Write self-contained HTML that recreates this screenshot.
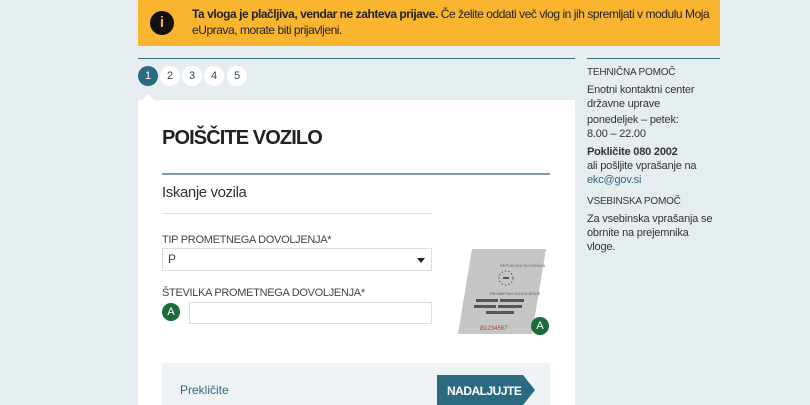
<!DOCTYPE html>
<html><head><meta charset="utf-8"><style>
body{margin:0;width:810px;height:405px;overflow:hidden;background:#e6edf0;font-family:"Liberation Sans",sans-serif;position:relative;color:#222}
.a{position:absolute}
.banner{left:138px;top:0;width:582px;height:46px;background:#f9b430}
.card{left:138px;top:100px;width:437px;height:305px;background:#fff}
.st{width:20px;height:20px;border-radius:50%;background:#fff;font-size:11px;text-align:center;line-height:20px;color:#444;top:66px}
.lbl{font-size:11px;color:#444;letter-spacing:-0.3px}
.sb{font-size:11px;color:#333;line-height:14px;left:587px;letter-spacing:-0.2px}
</style></head><body>
<div class="a banner"></div>
<div class="a" style="left:150px;top:11px;width:24px;height:24px;border-radius:50%;background:#111;color:#f9b430;font-weight:bold;font-size:15px;text-align:center;line-height:24px">i</div>
<div class="a" style="left:192px;top:6px;width:528px;font-size:12px;line-height:16px;color:#222;letter-spacing:-0.45px"><b>Ta vloga je plačljiva, vendar ne zahteva prijave.</b> Če želite oddati več vlog in jih spremljati v modulu Moja eUprava, morate biti prijavljeni.</div>
<div class="a" style="left:138px;top:58px;width:437px;height:1px;background:#3b6b80"></div>
<div class="a" style="left:587px;top:58px;width:133px;height:1px;background:#3b6b80"></div>
<div class="a card"></div>
<div class="a st" style="left:138px;background:#2b6a80;color:#fff">1</div>
<div class="a st" style="left:160px">2</div>
<div class="a st" style="left:182px">3</div>
<div class="a st" style="left:204px">4</div>
<div class="a st" style="left:227px">5</div>
<div class="a" style="left:142px;top:94px;width:0;height:0;border:6px solid transparent;border-bottom-color:#fff;border-top:0"></div>
<div class="a" style="left:162px;top:127px;font-size:20px;font-weight:bold;color:#222;letter-spacing:-0.9px">POIŠČITE VOZILO</div>
<div class="a" style="left:162px;top:173px;width:388px;height:2px;background:#7d98a6"></div>
<div class="a" style="left:162px;top:184px;font-size:15px;color:#333;letter-spacing:-0.4px">Iskanje vozila</div>
<div class="a" style="left:162px;top:213px;width:270px;height:1px;background:#ddd"></div>
<div class="a lbl" style="left:162px;top:234px">TIP PROMETNEGA DOVOLJENJA*</div>
<div class="a" style="left:162px;top:248px;width:268px;height:21px;border:1px solid #ddd;font-size:12px;line-height:21px;color:#444"><span style="padding-left:5px">P</span><span style="position:absolute;right:6px;top:9px;border:4px solid transparent;border-top:5px solid #222;border-bottom:0"></span></div>
<div class="a lbl" style="left:162px;top:287px">ŠTEVILKA PROMETNEGA DOVOLJENJA*</div>
<div class="a" style="left:162px;top:303px;width:18px;height:18px;border-radius:50%;background:#1e6b3a;color:#fff;font-size:11px;text-align:center;line-height:18px">A</div>
<div class="a" style="left:189px;top:302px;width:241px;height:20px;border:1px solid #ddd"></div>
<svg class="a" style="left:458px;top:247px" width="90" height="90"><polygon points="14,2 88,2 74,87 0,87" fill="#c4c7c3"/><text x="42" y="20" font-size="4" fill="#666" font-family="Liberation Sans">REPUBLIKA SLOVENIJA</text><circle cx="48" cy="31" r="7" fill="none" stroke="#555" stroke-dasharray="1.5 2"/><rect x="45" y="30" width="6" height="2" fill="#555"/><text x="32" y="48" font-size="4" fill="#555" font-family="Liberation Sans">PROMETNO DOVOLJENJE</text><rect x="18" y="52" width="22" height="3" fill="#555"/><rect x="42" y="52" width="24" height="3" fill="#555"/><rect x="16" y="58" width="22" height="3" fill="#555"/><rect x="40" y="58" width="24" height="3" fill="#555"/><rect x="28" y="64" width="28" height="3" fill="#555"/><text x="22" y="83" font-size="6" fill="#c33" font-style="italic" font-family="Liberation Sans">B1234567</text></svg>
<div class="a" style="left:531px;top:317px;width:18px;height:18px;border-radius:50%;background:#1e6b3a;color:#fff;font-size:11px;text-align:center;line-height:18px">A</div>
<div class="a" style="left:162px;top:363px;width:388px;height:42px;background:#eef3f5"></div>
<div class="a" style="left:180px;top:383px;font-size:12px;color:#2b6a80">Prekličite</div>
<svg class="a" style="left:437px;top:375px" width="100" height="30"><polygon points="0,0 86,0 98,15 86,30 0,30" fill="#2b6a80"/><text x="10" y="20" font-size="12" font-weight="bold" fill="#fff" font-family="Liberation Sans" letter-spacing="-0.5">NADALJUJTE</text></svg>
<div class="a sb" style="top:66px;font-size:10px">TEHNIČNA POMOČ</div>
<div class="a sb" style="top:83px">Enotni kontaktni center<br>državne uprave</div>
<div class="a sb" style="top:113px">ponedeljek – petek:<br>8.00 – 22.00</div>
<div class="a sb" style="top:145px"><b>Pokličite 080 2002</b><br>ali pošljite vprašanje na<br><span style="color:#2b6a80">ekc@gov.si</span></div>
<div class="a sb" style="top:195px;font-size:10px">VSEBINSKA POMOČ</div>
<div class="a sb" style="top:212px">Za vsebinska vprašanja se<br>obrnite na prejemnika<br>vloge.</div>
</body></html>
